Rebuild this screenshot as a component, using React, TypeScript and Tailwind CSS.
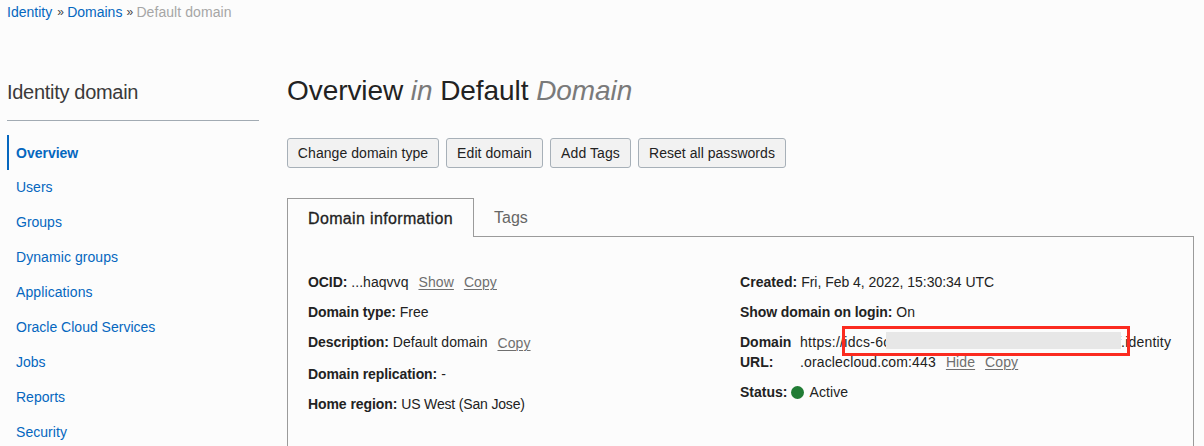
import type { ReactNode } from "react";

const navItems = [
  { label: "Users", tracking: "" },
  { label: "Groups", tracking: "" },
  { label: "Dynamic groups", tracking: "tracking-[0.07px]" },
  { label: "Applications", tracking: "tracking-[0.1px]" },
  { label: "Oracle Cloud Services", tracking: "" },
  { label: "Jobs", tracking: "" },
  { label: "Reports", tracking: "" },
  { label: "Security", tracking: "tracking-[0.05px]" },
];

const actions = [
  { label: "Change domain type", width: "w-[152px]", tracking: "tracking-[0.06px]" },
  { label: "Edit domain", width: "w-[97px]", tracking: "tracking-[0.08px]" },
  { label: "Add Tags", width: "w-[81px]", tracking: "tracking-[0.08px]" },
  { label: "Reset all passwords", width: "w-[148px]", tracking: "tracking-[0.03px]" },
];

function Action({ children, className = "ml-[10px]" }: { children: ReactNode; className?: string }) {
  return (
    <a
      className={`${className} tracking-[0.1px] text-[#6f6f6f] underline decoration-1 underline-offset-[1.5px]`}
    >
      {children}
    </a>
  );
}

function Field({
  label,
  labelTracking = "tracking-[-0.08px]",
  valueTracking = "tracking-[0.04px]",
  children,
}: {
  label: string;
  labelTracking?: string;
  valueTracking?: string;
  children: ReactNode;
}) {
  return (
    <div className="flex h-5 whitespace-pre">
      <span className={`font-bold ${labelTracking}`}>{label}:</span>
      <span className={`ml-1 ${valueTracking}`}>{children}</span>
    </div>
  );
}

export default function App() {
  return (
    <div className="h-[446px] w-[1204px] overflow-hidden bg-[#fcfcfc] font-['Liberation_Sans',Arial,sans-serif] text-sm leading-5 text-[#222222]">
      <nav className="flex h-[22px] pt-[2px] pl-[7px]">
        <a className="text-[#0567bf]">Identity</a>
        <span className="ml-[5px] w-[10px] text-[12px] text-[#444]">»</span>
        <a className="text-[#0567bf]">Domains</a>
        <span className="ml-[4px] w-[10px] text-[12px] text-[#444]">»</span>
        <span className="tracking-[0.07px] text-[#a6a6a6]">Default domain</span>
      </nav>

      <div className="flex">
        <aside className="ml-[7px] w-[252px] shrink-0">
          <h2 className="h-[99px] border-b border-[#a2abb3] pt-[56px] text-xl leading-7 tracking-[-0.3px] text-[#3a3a3a]">
            Identity domain
          </h2>
          <ul className="mt-[14px] text-[#0567bf]">
            <li className="h-[35px] border-l-2 border-[#0567bf] pl-[7px] font-bold leading-[37px]">Overview</li>
            {navItems.map(({ label, tracking }) => (
              <li key={label} className={`h-[35px] pl-[9px] leading-[35px] ${tracking}`}>
                {label}
              </li>
            ))}
          </ul>
        </aside>

        <main className="ml-[28px] w-[907px] shrink-0">
          <h1 className="pt-[51px] text-[28px] leading-[36px] tracking-[-0.07px]">
            Overview <i className="text-[#7a7a7a]">in</i> Default <i className="text-[#7a7a7a]">Domain</i>
          </h1>

          <div className="mt-[29px] flex gap-[7px]">
            {actions.map(({ label, width, tracking }) => (
              <button
                key={label}
                className={`${width} ${tracking} h-[30px] whitespace-nowrap rounded-[3px] border border-[#a7b0b8] bg-[#f2f2f2] text-center`}
              >
                {label}
              </button>
            ))}
          </div>

          <div className="mt-[30px] flex h-[39px] text-base">
            <div className="w-[187px] border border-b-0 border-[#9b9b9b] pl-5 leading-[39px] tracking-[0.35px] [-webkit-text-stroke:0.3px_#222222]">
              Domain information
            </div>
            <div className="flex-1 border-b border-[#9b9b9b] pl-5 leading-[40px] text-[#666]">Tags</div>
          </div>

          <section className="flex h-[220px] border-x border-[#9b9b9b] pt-[35px] pl-5">
            <div className="flex w-[432px] flex-col gap-[10px]">
              <Field label="OCID">
                ...haqvvq<Action>Show</Action>
                <Action>Copy</Action>
              </Field>
              <Field label="Domain type">Free</Field>
              <Field label="Description">
                Default domain<Action className="relative top-px ml-[10px]">Copy</Action>
              </Field>
              <div className="pt-[2px]">
                <Field label="Domain replication">-</Field>
              </div>
              <Field label="Home region" valueTracking="tracking-[-0.17px]">
                US West (San Jose)
              </Field>
            </div>

            <div className="flex flex-col gap-[10px]">
              <Field label="Created" labelTracking="tracking-[0.05px]" valueTracking="tracking-[-0.03px]">
                Fri, Feb 4, 2022, 15:30:34 UTC
              </Field>
              <Field label="Show domain on login">On</Field>
              <div className="flex">
                <div className="w-[60px] font-bold">
                  Domain
                  <br />
                  URL:
                </div>
                <div className="relative whitespace-nowrap">
                  <div className="flex h-5">
                    <span className="w-[86px] overflow-hidden tracking-[0.28px]">https://idcs-6c</span>
                    <span className="relative z-10 h-[17px] w-[235px] bg-[#e7e7e7]" />
                    <span className="-ml-[4px] tracking-[0.2px]">f.identity</span>
                  </div>
                  <div className="h-5 tracking-[0.14px]">
                    .oraclecloud.com:443<Action>Hide</Action>
                    <Action>Copy</Action>
                  </div>
                  <div className="absolute -top-[6px] left-[42px] z-20 h-[30px] w-[288px] border-[3px] border-[#fb2b20]" />
                </div>
              </div>
              <div className="flex items-center">
                <b>Status:</b>
                <span className="ml-1 size-[13px] rounded-full bg-[#217c35]" />
                <span className="ml-[5px] tracking-[0.1px]">Active</span>
              </div>
            </div>
          </section>
        </main>
      </div>
    </div>
  );
}
